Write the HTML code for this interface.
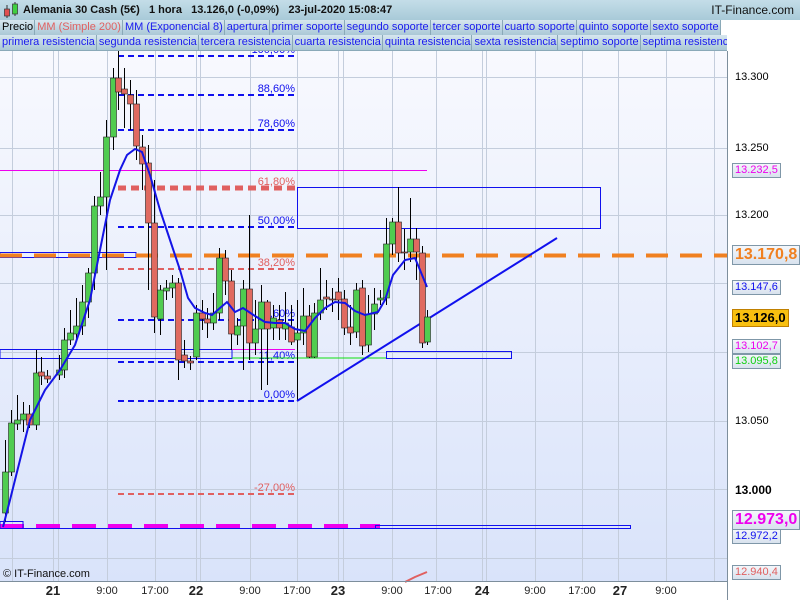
<!DOCTYPE html>
<html><head><meta charset="utf-8"><style>
*{margin:0;padding:0;box-sizing:border-box}
body{width:800px;height:600px;overflow:hidden;background:#fff;font-family:"Liberation Sans",sans-serif;position:relative}
#hdr{position:absolute;left:0;top:0;width:800px;height:20px;background:linear-gradient(#c4dde8,#a8cad8);font-size:11px;font-weight:bold;color:#111}
.row{position:absolute;left:0;height:16px;display:flex;font-size:11px;color:#1a1aee;background:#fff}
.row span{background:linear-gradient(#d6e6ef,#aac8d6);border:1px solid #8aa9b8;border-top:none;border-left:none;padding:0 1px 0 2px;line-height:15px;white-space:nowrap}
.lab{position:absolute;font-size:11px;border:1px solid #7f97a8;background:linear-gradient(#f4f7fb,#d8e2ee);padding:0 2px;line-height:13px}
.tick{position:absolute;font-size:11px;color:#000}
.t{position:absolute;top:585px;font-size:11px;color:#222;transform:translateX(-50%)}
.tb{font-weight:bold;font-size:13px;top:583px}
</style></head><body>
<div id="hdr">
<svg width="16" height="18" style="position:absolute;left:3px;top:1px"><line x1="4" y1="4" x2="4" y2="17" stroke="#333"/><rect x="1.5" y="8" width="5" height="7" fill="#e05050" stroke="#333" stroke-width=".7"/><line x1="12" y1="1" x2="12" y2="15" stroke="#333"/><rect x="9.5" y="3" width="5" height="10" fill="#40d040" stroke="#333" stroke-width=".7"/></svg>
<span style="position:absolute;left:23px;top:4px">Alemania 30 Cash (5€)&nbsp;&nbsp;&nbsp;1 hora&nbsp;&nbsp;&nbsp;13.126,0 (-0,09%)&nbsp;&nbsp;&nbsp;23-jul-2020 15:08:47</span>
<span style="position:absolute;right:6px;top:3px;font-weight:normal;font-size:12px">IT-Finance.com</span>
</div>
<div class="row" style="top:20px"><span style="color:#000">Precio</span><span style="color:#e06060">MM (Simple 200)</span><span>MM (Exponencial 8)</span><span>apertura</span><span>primer soporte</span><span>segundo soporte</span><span>tercer soporte</span><span>cuarto soporte</span><span>quinto soporte</span><span>sexto soporte</span></div>
<div class="row" style="top:35px;width:727px;overflow:hidden"><span>primera resistencia</span><span>segunda resistencia</span><span>tercera resistencia</span><span>cuarta resistencia</span><span>quinta resistencia</span><span>sexta resistencia</span><span>septimo soporte</span><span>septima resistencia</span></div>
<svg id="c" width="800" height="549" style="position:absolute;left:0;top:51px" viewBox="0 51 800 549">
<defs><linearGradient id="bg" x1="0" y1="0" x2="0" y2="1"><stop offset="0" stop-color="#f8f9fe"/><stop offset="1" stop-color="#d9e3fa"/></linearGradient></defs>
<rect x="0" y="51" width="727" height="530" fill="url(#bg)"/>
<g id="grid" stroke="#c4cddc" stroke-width="1"></g>
<g id="lines"></g>
<g id="cand"></g>
<line x1="727.5" y1="51" x2="727.5" y2="600" stroke="#7d8e9c"/>
<line x1="0" y1="581.5" x2="727" y2="581.5" stroke="#7d8e9c"/>
</svg>
<div class="tick" style="left:735px;top:71px">13.300</div>
<div class="tick" style="left:735px;top:142px">13.250</div>
<div class="tick" style="left:735px;top:209px">13.200</div>
<div class="tick" style="left:735px;top:415px">13.050</div>
<div class="tick" style="left:735px;top:483px;font-weight:bold;font-size:12px">13.000</div>
<div class="lab" style="left:732px;top:163px;color:#ee00ee">13.232,5</div>
<div class="lab" style="left:732px;top:245px;color:#f08020;font-size:16px;font-weight:bold;line-height:18px">13.170,8</div>
<div class="lab" style="left:732px;top:280px;color:#1010ee">13.147,6</div>
<div class="lab" style="left:732px;top:309px;color:#000;background:#f8c010;font-weight:bold;font-size:13px;line-height:16px;border-color:#c08000">13.126,0</div>
<div class="lab" style="left:732px;top:339px;color:#ee00ee">13.102,7</div>
<div class="lab" style="left:732px;top:354px;color:#10d010">13.095,8</div>
<div class="lab" style="left:732px;top:510px;color:#ee00ee;font-size:16px;font-weight:bold;line-height:18px">12.973,0</div>
<div class="lab" style="left:732px;top:529px;color:#1010ee">12.972,2</div>
<div class="lab" style="left:732px;top:565px;color:#e06060">12.940,4</div>
<div style="position:absolute;left:3px;top:568px;font-size:11px;color:#111">© IT-Finance.com</div>
<div class="t tb" style="left:53px">21</div><div class="t" style="left:107px">9:00</div><div class="t" style="left:155px">17:00</div>
<div class="t tb" style="left:196px">22</div><div class="t" style="left:250px">9:00</div><div class="t" style="left:297px">17:00</div>
<div class="t tb" style="left:338px">23</div><div class="t" style="left:392px">9:00</div><div class="t" style="left:438px">17:00</div>
<div class="t tb" style="left:482px">24</div><div class="t" style="left:535px">9:00</div><div class="t" style="left:582px">17:00</div>
<div class="t tb" style="left:620px">27</div><div class="t" style="left:666px">9:00</div>
<script>
var NS="http://www.w3.org/2000/svg";
function el(p,t,a){var e=document.createElementNS(NS,t);for(var k in a)e.setAttribute(k,a[k]);document.getElementById(p).appendChild(e);return e;}
[12,53,58,107,155,196,200,250,297,338,343,392,436,482,486,535,582,618,666,714].forEach(function(x){el("grid","line",{x1:x+.5,y1:51,x2:x+.5,y2:581});});
[77,148,215,283,352,421,489,558].forEach(function(y){el("grid","line",{x1:0,y1:y+.5,x2:727,y2:y+.5});});
var fib=[[56,"100,00%","#1010ee",2],[95,"88,60%","#1010ee",2],[130,"78,60%","#1010ee",2],[188,"61,80%","#e06060",5],[227,"50,00%","#1010ee",2],[269,"38,20%","#e06060",2],[320,"23,60%","#1010ee",2],[362,"11,40%","#1010ee",2],[401,"0,00%","#1010ee",2],[494,"-27,00%","#e06060",2]];
fib.forEach(function(f){el("lines","line",{x1:118,y1:f[0],x2:295,y2:f[0],stroke:f[2],"stroke-width":f[3],"stroke-dasharray":f[3]>3?"8 5":"6 4"});var t=el("lines","text",{x:295,y:f[0]-3,"text-anchor":"end","font-size":"11",fill:f[2],"font-family":"Liberation Sans"});t.textContent=f[1];});
el("lines","line",{x1:118.5,y1:51,x2:118.5,y2:56,stroke:"#000"});
el("lines","line",{x1:0,y1:170.5,x2:427,y2:170.5,stroke:"#ee00ee"});
el("lines","rect",{x:297.5,y:187.5,width:303,height:41,fill:"none",stroke:"#1010ee"});
el("lines","rect",{x:0,y:252.5,width:136,height:5,fill:"none",stroke:"#1010ee"});
el("lines","line",{x1:0,y1:255.5,x2:727,y2:255.5,stroke:"#f08020","stroke-width":4,"stroke-dasharray":"22 12"});
el("lines","rect",{x:0,y:349.5,width:232,height:9,fill:"none",stroke:"#1010ee"});
el("lines","line",{x1:232,y1:349.5,x2:295,y2:349.5,stroke:"#ee00ee"});
el("lines","line",{x1:232,y1:358,x2:386,y2:358,stroke:"#10e010"});
el("lines","rect",{x:386.5,y:351.5,width:125,height:7,fill:"none",stroke:"#1010ee"});
el("lines","line",{x1:297.5,y1:358,x2:297.5,y2:401,stroke:"#000"});
el("lines","line",{x1:297,y1:401,x2:557,y2:238,stroke:"#1010ee","stroke-width":2});
el("lines","line",{x1:0,y1:528.5,x2:630,y2:528.5,stroke:"#1010ee"});
el("lines","line",{x1:0,y1:526,x2:380,y2:526,stroke:"#ee00ee","stroke-width":4,"stroke-dasharray":"24 12"});
el("lines","rect",{x:0,y:521.5,width:23,height:7,fill:"none",stroke:"#1010ee"});
el("lines","rect",{x:375.5,y:525.5,width:255,height:3,fill:"none",stroke:"#1010ee"});
el("lines","path",{d:"M405 582 L415 577 L427 572",stroke:"#e06060","stroke-width":2,fill:"none"});
var C=[[5,472,513,1,440,522],[11,423,472,1,410,476],[17,420,424,1,395,430],[23,414,420,1,402,432],[29,414,425,0,405,428],[36,373,425,1,350,430],[41,372,376,0,357,385],[47,376,379,0,370,383],[59,370,375,1,355,380],[64,340,370,1,328,378],[70,333,340,1,310,345],[76,326,334,1,298,342],[82,302,326,1,285,335],[88,273,302,1,268,318],[94,206,273,1,196,290],[100,197,206,1,172,215],[106,137,197,1,120,270],[113,78,137,1,68,150],[118,78,92,0,55,110],[124,89,94,0,68,128],[130,95,104,0,80,130],[136,104,146,0,90,160],[142,147,164,0,135,190],[148,163,223,0,145,290],[154,223,317,0,180,333],[160,290,319,1,285,335],[166,288,291,1,280,300],[172,283,288,1,275,298],[178,283,360,0,278,380],[184,355,361,0,340,368],[190,361,363,0,356,370],[196,313,357,1,305,360],[202,313,319,0,300,330],[207,319,323,0,308,338],[213,313,323,1,293,330],[219,258,313,1,248,320],[225,258,281,0,250,295],[231,281,334,0,270,350],[237,326,335,1,318,345],[243,289,326,1,280,370],[249,289,343,0,215,360],[255,329,343,1,300,355],[261,302,329,1,285,390],[267,302,329,0,300,385],[273,318,328,1,305,340],[279,320,328,0,305,340],[285,323,329,1,292,340],[291,327,342,0,305,345],[297,333,340,1,300,358],[303,316,333,1,288,345],[309,316,357,0,305,358],[314,313,357,1,303,358],[320,300,313,1,268,320],[326,297,299,0,280,310],[332,299,299.8,0,288,312],[338,292,300,0,278,320],[344,299,328,0,290,335],[350,327,333,0,305,345],[356,290,332,1,283,338],[362,288,346,0,280,355],[368,314,345,1,295,352],[374,304,314,1,288,330],[380,298,300,1,290,305],[386,244,298,1,218,305],[392,222,244,1,218,255],[398,222,253,0,187,262],[404,252,253,0,229,270],[410,239,252,1,198,262],[416,239,252,0,228,280],[422,253,343,0,246,348],[427,317,342,1,310,345]];
C.forEach(function(c){el("cand","line",{x1:c[0]+.5,y1:c[4],x2:c[0]+.5,y2:c[5],stroke:"#000"});el("cand","rect",{x:c[0]-2.5,y:c[1],width:6,height:Math.max(1,c[2]-c[1]),fill:c[3]?"#50cc50":"#e06a60",stroke:"#222","stroke-width":.6});});
var E=[[3,527],[10,500],[20,460],[30,420],[45,390],[60,370],[75,345],[90,300],[100,250],[110,200],[120,170],[127,155],[135,149],[142,152],[150,175],[160,210],[170,240],[180,270],[188,298],[195,308],[205,313],[212,315],[220,308],[227,302],[235,312],[243,308],[255,316],[265,322],[275,323],[285,323],[295,329],[305,331],[315,318],[325,308],[335,302],[345,303],[355,311],[365,315],[378,312],[385,300],[393,275],[405,260],[415,258],[420,270],[427,287]];
el("cand","polyline",{points:E.map(function(p){return p.join(",")}).join(" "),fill:"none",stroke:"#1414e6","stroke-width":2});
</script>
</body></html>
